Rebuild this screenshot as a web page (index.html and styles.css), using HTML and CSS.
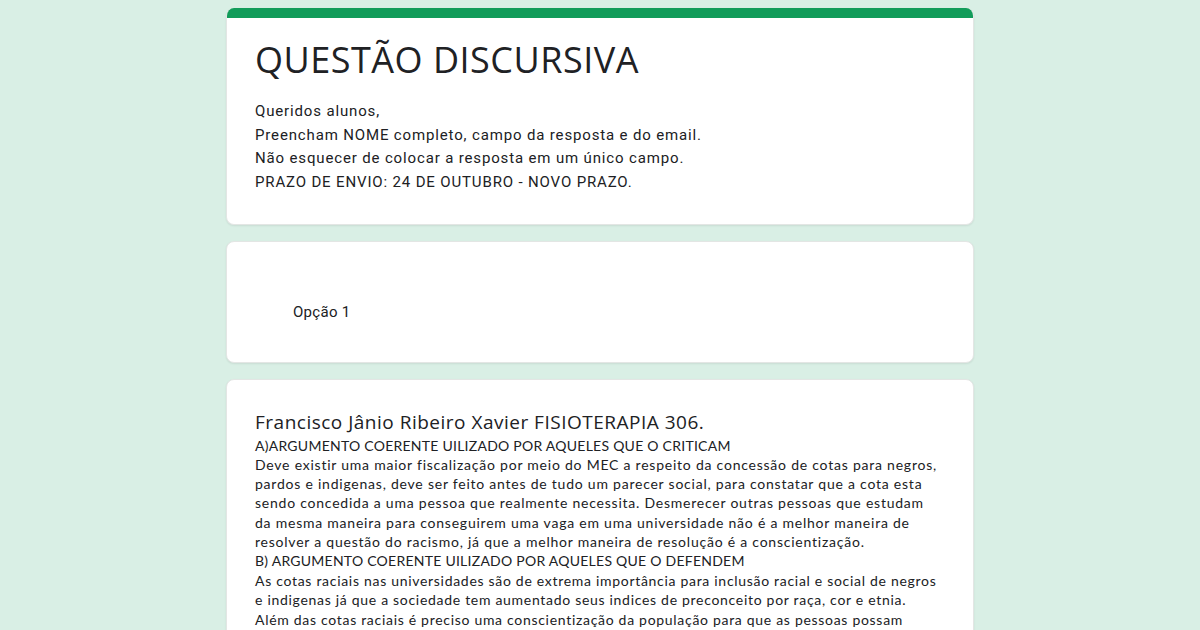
FILE: index.html
```html
<!DOCTYPE html>
<html lang="pt">
<head>
<meta charset="utf-8">
<title>QUESTÃO DISCURSIVA</title>
<link rel="stylesheet" href="styles.css">
</head>
<body>
<main class="form">
  <section class="card header-card">
    <div class="band"></div>
    <div class="header-body">
      <h1 class="title">QUESTÃO DISCURSIVA</h1>
      <div class="desc">
        <div>Queridos alunos,</div>
        <div>Preencham NOME completo, campo da resposta e do email.</div>
        <div>Não esquecer de colocar a resposta em um único campo.</div>
        <div>PRAZO DE ENVIO: 24 DE OUTUBRO - NOVO PRAZO.</div>
      </div>
    </div>
  </section>

  <section class="card option-card">
    <div class="option">Opção 1</div>
  </section>

  <section class="card answer-card">
    <h2 class="name">Francisco Jânio Ribeiro Xavier FISIOTERAPIA 306.</h2>
    <div class="answer">
      <div class="caps">A)ARGUMENTO COERENTE UILIZADO POR AQUELES QUE O CRITICAM</div>
      <div>Deve existir uma maior fiscalização por meio do MEC a respeito da concessão de cotas para negros, pardos e indigenas, deve ser feito antes de tudo um parecer social, para constatar que a cota esta sendo concedida a uma pessoa que realmente necessita. Desmerecer outras pessoas que estudam da mesma maneira para conseguirem uma vaga em uma universidade não é a melhor maneira de resolver a questão do racismo, já que a melhor maneira de resolução é a conscientização.</div>
      <div class="caps">B) ARGUMENTO COERENTE UILIZADO POR AQUELES QUE O DEFENDEM</div>
      <div class="para2">As cotas raciais nas universidades são de extrema importância para inclusão racial e social de negros e indigenas já que a sociedade tem aumentado seus indices de preconceito por raça, cor e etnia. Além das cotas raciais é preciso uma conscientização da população para que as pessoas possam respeitar as diferenças e conviver em harmonia.</div>
    </div>
  </section>
</main>
</body>
</html>
```

FILE: styles.css
```css
html, body {
  margin: 0;
  padding: 0;
}
body {
  background: #d9efe5;
  font-family: Roboto, "Liberation Sans", sans-serif;
  color: #202124;
  height: 630px;
  overflow: hidden;
}
.form {
  width: 748px;
  margin: 8px auto 0;
  display: flex;
  flex-direction: column;
  gap: 16px;
}
.card {
  background: #fff;
  border-radius: 8px;
  box-shadow: 0 1px 2px rgba(0,0,0,0.08);
  border: 1px solid #e3e6e4;
  box-sizing: border-box;
}
.header-card {
  overflow: hidden;
  border-top: none;
}
.band {
  height: 10px;
  background: #129c5a;
}
.header-body {
  padding: 20px 30px 29px 28px;
}
.title {
  margin: 0;
  font-family: "Open Sans", Roboto, sans-serif;
  font-weight: 400;
  font-size: 36px;
  line-height: 44px;
  letter-spacing: 0.5px;
  color: #202124;
}
.desc {
  margin-top: 18px;
  font-size: 15px;
  line-height: 23.7px;
  letter-spacing: 0.85px;
  color: #202124;
}
.option-card {
  height: 122px;
  display: flex;
  align-items: center;
  padding-left: 66px;
}
.option {
  font-size: 15px;
  letter-spacing: 0.3px;
  color: #202124;
  padding-top: 20px;
}
.answer-card {
  padding: 30px 30px 30px 28px;
  height: 400px;
}
.name {
  margin: 0;
  font-family: "Open Sans", Roboto, sans-serif;
  font-weight: 400;
  font-size: 19px;
  line-height: 24px;
  letter-spacing: 0.5px;
  color: #202124;
}
.answer {
  margin-top: 2px;
  font-family: Lato, "Liberation Sans", sans-serif;
  font-size: 14px;
  line-height: 19.2px;
  letter-spacing: 0.77px;
  color: #202124;
}
.answer .caps {
  letter-spacing: 0.25px;
}
.answer .para2 {
  margin-top: 1px;
  letter-spacing: 0.7px;
}
```
